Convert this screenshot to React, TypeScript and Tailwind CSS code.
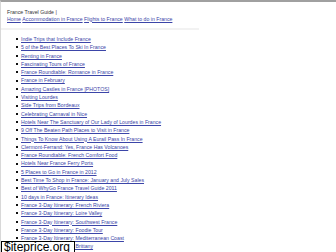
import React from "react";

const items = [
  "Indie Trips that Include France",
  "5 of the Best Places To Ski In France",
  "Renting in France",
  "Fascinating Tours of France",
  "France Roundtable: Romance in France",
  "France in February",
  "Amazing Castles in France [PHOTOS]",
  "Visiting Lourdes",
  "Side Trips from Bordeaux",
  "Celebrating Carnaval in Nice",
  "Hotels Near The Sanctuary of Our Lady of Lourdes in France",
  "9 Off The Beaten Path Places to Visit in France",
  "Things To Know About Using A Eurail Pass In France",
  "Clermont-Ferrand: Yes, France Has Volcanoes",
  "France Roundtable: French Comfort Food",
  "Hotels Near France Ferry Ports",
  "5 Places to Go in France in 2012",
  "Best Time To Shop in France: January and July Sales",
  "Best of WhyGo France Travel Guide 2011",
  "10 days in France: Itinerary Ideas",
  "France 3-Day Itinerary: French Riviera",
  "France 3-Day Itinerary: Loire Valley",
  "France 3-Day Itinerary: Southwest France",
  "France 3-Day Itinerary: Foodie Tour",
  "France 3-Day Itinerary: Mediterranean Coast",
  "France 3-Day Itinerary: Brittany",
];

const nav = ["Home", "Accommodation in France", "Flights to France", "What to do in France"];

export default function App() {
  return (
    <div
      className="w-[336px] h-[252px] overflow-hidden bg-white border-t-2 border-t-[#a0a0a0] border-l border-l-[#d8d8d8] relative"
      style={{ fontFamily: '"Liberation Sans", Arial, sans-serif' }}
    >
      <div className="pl-[6px] pt-[7px] text-[5.2px] leading-[6.5px]">
        <div className="text-[#333]">France Travel Guide |</div>
        <div className="flex gap-[1.5px]">
          {nav.map((n) => (
            <a key={n} className="text-[#3b45a8] underline">
              {n}
            </a>
          ))}
        </div>
      </div>
      <div className="mt-[6px] w-[198px] h-[2px] bg-[#f2f2f2]" />
      <ul className="mt-[5px] pl-[15px] text-[5.2px] leading-[8.3px]">
        {items.map((t) => (
          <li key={t} className="flex items-center gap-[3px] whitespace-nowrap">
            <span className="w-[2px] h-[2px] bg-[#111] shrink-0" />
            <a className="text-[#3b45a8] underline">{t}</a>
          </li>
        ))}
      </ul>
      <div className="absolute left-0 top-[239px] w-[74px] h-[14px] bg-white border border-black pl-[2px] text-[12px] leading-[10px] text-black">
        $iteprice.org
      </div>
    </div>
  );
}
